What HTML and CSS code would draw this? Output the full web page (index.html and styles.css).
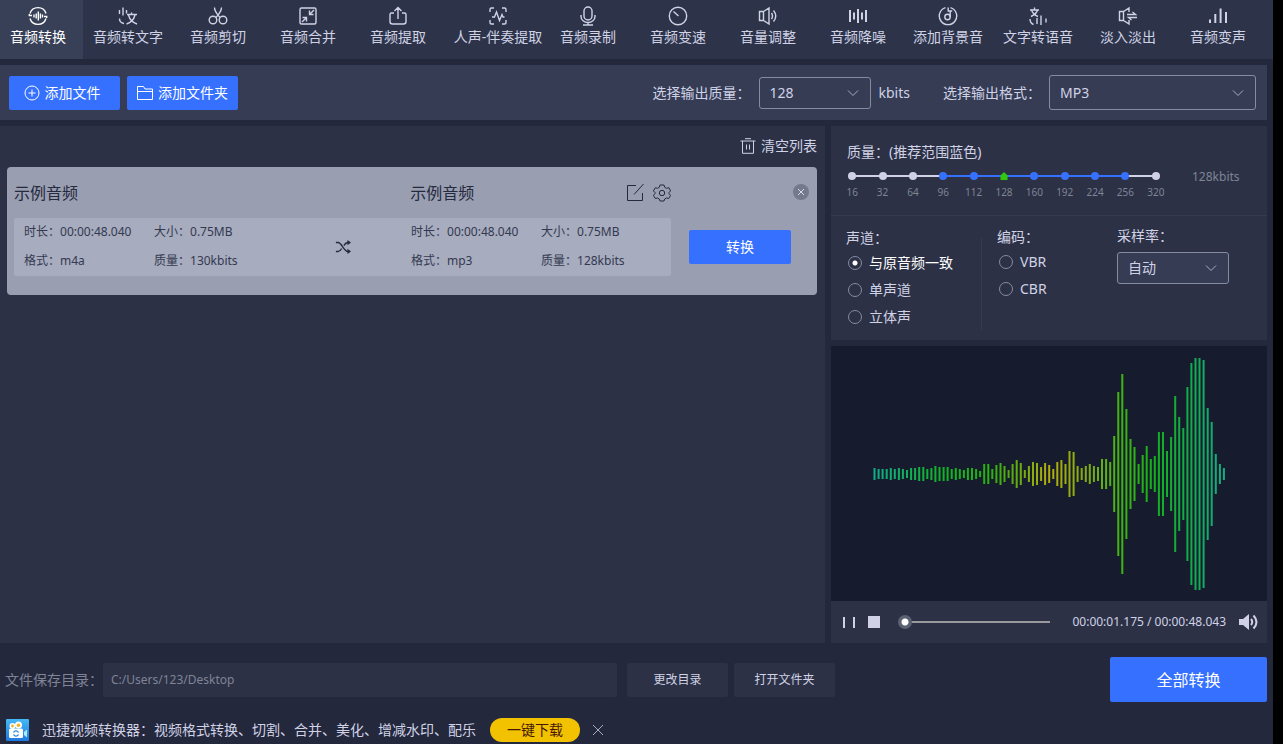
FILE: index.html
```html
<!DOCTYPE html>
<html lang="zh-CN">
<head>
<meta charset="utf-8">
<title>音频转换</title>
<link rel="stylesheet" href="styles.css">
</head>
<body>
<div class="app">
  <nav class="tabs">
    <button class="tab tab-active" type="button"><svg class="icon" viewBox="0 0 20 20"><path d="M2 7.500A8.400 8.400 0 0 1 18 7.500M2 12.500A8.400 8.400 0 0 0 18 12.500M1.300 8v1.500h2.700M18.700 12v-1.500H16M6 8.500v3M8.200 7.500v5M10.300 5.500v9M12.400 7.500v5M14.500 8.500v3"/></svg><span>音频转换</span></button>
    <button class="tab" type="button"><svg class="icon" viewBox="0 0 20 20"><path d="M1.500 4v4M5 1.500v8M8.500 4v3.500M1.500 12.500c0 3 1.500 4.500 4.500 5M9 8.500h10M13.500 6.500v2M10.500 9c1 4 4 7.500 8.500 9M17 9c-1 4-4 7.500-8.500 9"/></svg><span>音频转文字</span></button>
    <button class="tab" type="button"><svg class="icon" viewBox="0 0 20 20"><circle cx="5" cy="14" r="3.800"/><circle cx="15" cy="14" r="3.800"/><path d="M6.500 1.500c0 4 2.500 6.500 5.500 10M13.500 1.500c0 4-2.500 6.500-5.500 10"/></svg><span>音频剪切</span></button>
    <button class="tab" type="button"><svg class="icon" viewBox="0 0 20 20"><rect x="2" y="2" width="16" height="16" rx="1.500"/><path d="M16 4l-4.500 4.500M11.500 4.500v4h4M4 16l4.500-4.500M4.500 11.500h4v4"/></svg><span>音频合并</span></button>
    <button class="tab" type="button"><svg class="icon" viewBox="0 0 20 20"><path d="M6 7H3.500Q2 7 2 8.500v7Q2 18 4.500 18h11q2.500 0 2.500-2.500v-7Q18 7 16.500 7H14M10 13V1.500M6.500 5L10 1.500 13.500 5"/></svg><span>音频提取</span></button>
    <button class="tab tab-wide" type="button"><svg class="icon" viewBox="0 0 20 20"><path d="M2 6V3.500Q2 2 3.500 2H6M14 2h2.500Q18 2 18 3.500V6M18 14v2.500q0 1.500-1.500 1.500H14M6 18H3.500Q2 18 2 16.500V14M4 11h2.500l2-5 3 8.500 2.500-6 1 2.500h1.500"/></svg><span>人声-伴奏提取</span></button>
    <button class="tab" type="button"><svg class="icon" viewBox="0 0 20 20"><rect x="6" y="1" width="8" height="13" rx="4"/><path d="M3 9v1.500a7 6 0 0 0 14 0V9M10 16.500V19M5 19h10"/></svg><span>音频录制</span></button>
    <button class="tab" type="button"><svg class="icon" viewBox="0 0 20 20"><circle cx="10" cy="10" r="8.700"/><path d="M5.500 5.500L10.500 10"/></svg><span>音频变速</span></button>
    <button class="tab" type="button"><svg class="icon" viewBox="0 0 20 20"><path d="M5.500 5.500L11 2v16l-5.500-3.500H1.500v-9h4v9M13.500 7q2 3 0 6M15.500 4.500q4.500 5.500 0 11"/></svg><span>音量调整</span></button>
    <button class="tab" type="button"><svg class="icon icon-bold" viewBox="0 0 20 20"><path d="M2 4v12M6 6.500v7M10 3v14M14 6.500v7M18 4v12"/></svg><span>音频降噪</span></button>
    <button class="tab" type="button"><svg class="icon" viewBox="0 0 20 20"><path d="M7.500 1.600A8.700 8.700 0 1 0 12.500 1.600"/><circle cx="9.500" cy="11" r="2.700"/><path d="M12.200 11V4.500M10.200 1.500v3.500h4"/></svg><span>添加背景音</span></button>
    <button class="tab" type="button"><svg class="icon" viewBox="0 0 20 20"><path d="M2 4h9M6.500 1.500V4M3 10.500Q8.500 8 9.500 4M3.500 4Q5 8.500 10 10.500M2 13q0 4 3.500 5.500M9 12v6M13 9.500V19M18 12.500v4"/></svg><span>文字转语音</span></button>
    <button class="tab" type="button"><svg class="icon" viewBox="0 0 20 20"><path d="M11 6V2L5.500 5.500h-4v9h4L11 18v-4M5.500 5.500v9M9 8.500h8.500l-3-2.500M19 11.500h-8.500l3 2.500"/></svg><span>淡入淡出</span></button>
    <button class="tab" type="button"><svg class="icon icon-bold" viewBox="0 0 20 20"><path d="M2 13.500V17M7.300 8v9M12.600 2.500V17M18 6v11"/></svg><span>音频变声</span></button>
  </nav>

  <section class="toolbar">
    <button class="btn btn-add btn-file" type="button"><svg class="icon-sm" viewBox="0 0 16 16"><circle cx="8" cy="8" r="7"/><path d="M8 4.500v7M4.500 8h7"/></svg>添加文件</button>
    <button class="btn btn-add" type="button"><svg class="icon-sm" viewBox="0 0 16 16"><path d="M.500 14.500v-13h6l1.500 2.500h7.500v10.500zM.500 6.500h15"/></svg>添加文件夹</button>
    <div class="output">
      <label for="out-quality">选择输出质量：</label>
      <span class="select"><select id="out-quality"><option>128</option></select><svg class="chevron" viewBox="0 0 12 12"><path d="M1 3.500l5 5 5-5"/></svg></span>
      <span class="unit">kbits</span>
      <label for="out-format">选择输出格式：</label>
      <span class="select select-format"><select id="out-format"><option>MP3</option></select><svg class="chevron" viewBox="0 0 12 12"><path d="M1 3.500l5 5 5-5"/></svg></span>
    </div>
  </section>

  <main class="workspace">
    <section class="files">
      <button class="clear" type="button"><svg class="icon-sm" viewBox="0 0 16 16"><path d="M.500 3h15M5 .700h6M2.500 3v12.300h11V3M6.500 6.500v5M9.500 6.500v5"/></svg>清空列表</button>
      <article class="card">
        <div class="card-body">
          <div class="card-head">
            <h2>示例音频</h2>
            <h2>示例音频</h2>
            <div class="card-tools">
              <button type="button" aria-label="编辑"><svg class="icon-tool" viewBox="0 0 18 18"><path d="M10 1.500H1.500v15h15V9M8 10.500L17.500 0"/></svg></button>
              <button type="button" aria-label="设置"><svg class="icon-tool" viewBox="0 0 18 18"><circle cx="9" cy="9" r="2.700"/><path d="M7 1h4l.700 2.300 1.800 1 2.400-.600 1.700 3.200L16 8.500v1.200l1.600 1.600-1.900 3.200-2.300-.500-1.700 1L11 17H7l-.700-2-1.700-1-2.300.500-1.900-3.200L2 9.700V8.500L.400 6.900l1.900-3.200 2.300.600 1.700-1z"/></svg></button>
            </div>
          </div>
          <div class="card-info">
            <dl>
              <div><dt>时长：</dt><dd>00:00:48.040</dd></div><div><dt>大小：</dt><dd>0.75MB</dd></div>
              <div><dt>格式：</dt><dd>m4a</dd></div><div><dt>质量：</dt><dd>130kbits</dd></div>
            </dl>
            <svg class="shuffle" viewBox="0 0 18 18"><path d="M1 4h2.500c4 0 6.500 10 11 10H16M1 14h2.500c1.600 0 3-1.500 4-3.300M10 7.300C11.300 5.300 12.700 4 14.500 4H16"/><path class="solid" d="M14 1l4 3-4 3zM14 11l4 3-4 3z"/></svg>
            <dl>
              <div><dt>时长：</dt><dd>00:00:48.040</dd></div><div><dt>大小：</dt><dd>0.75MB</dd></div>
              <div><dt>格式：</dt><dd>mp3</dd></div><div><dt>质量：</dt><dd>128kbits</dd></div>
            </dl>
          </div>
        </div>
        <div class="card-side">
          <button class="close" type="button" aria-label="移除"><svg viewBox="0 0 16 16"><path d="M5 5l6 6M11 5l-6 6"/></svg></button>
          <button class="btn btn-convert" type="button">转换</button>
        </div>
      </article>
    </section>

    <aside class="side">
      <section class="settings">
        <div class="quality">
          <h3>质量：(推荐范围蓝色)</h3>
          <div class="quality-row">
            <div class="steps">
              <label class="step"><input type="radio" name="rate">16</label>
              <label class="step"><input type="radio" name="rate">32</label>
              <label class="step"><input type="radio" name="rate">64</label>
              <label class="step good first"><input type="radio" name="rate">96</label>
              <label class="step good"><input type="radio" name="rate">112</label>
              <label class="step good"><input type="radio" name="rate" checked>128</label>
              <label class="step good"><input type="radio" name="rate">160</label>
              <label class="step good"><input type="radio" name="rate">192</label>
              <label class="step good"><input type="radio" name="rate">224</label>
              <label class="step good"><input type="radio" name="rate">256</label>
              <label class="step"><input type="radio" name="rate">320</label>
            </div>
            <span class="rate">128kbits</span>
          </div>
        </div>
        <div class="options">
          <fieldset class="channel">
            <legend>声道：</legend>
            <label><input type="radio" name="channel" checked><span>与原音频一致</span></label>
            <label><input type="radio" name="channel"><span>单声道</span></label>
            <label><input type="radio" name="channel"><span>立体声</span></label>
          </fieldset>
          <fieldset class="codec">
            <legend>编码：</legend>
            <label><input type="radio" name="codec"><span>VBR</span></label>
            <label><input type="radio" name="codec"><span>CBR</span></label>
          </fieldset>
          <div class="sampling">
            <label for="sampling">采样率：</label>
            <span class="select select-dark"><select id="sampling"><option>自动</option></select><svg class="chevron" viewBox="0 0 12 12"><path d="M1 3.500l5 5 5-5"/></svg></span>
          </div>
        </div>
      </section>

      <section class="preview">
        <svg class="wave" viewBox="0 0 436 255">
          <defs>
            <linearGradient id="wave-colour" gradientUnits="userSpaceOnUse" x1="42" y1="0" x2="395" y2="0">
              <stop offset="0" stop-color="#0fae8c"/>
              <stop offset=".170" stop-color="#12b22e"/>
              <stop offset=".300" stop-color="#18b510"/>
              <stop offset=".400" stop-color="#5cac10"/>
              <stop offset=".500" stop-color="#b4ae0c"/>
              <stop offset=".600" stop-color="#82ac12"/>
              <stop offset=".700" stop-color="#42b512"/>
              <stop offset=".800" stop-color="#12b01c"/>
              <stop offset=".900" stop-color="#12ac4c"/>
              <stop offset="1" stop-color="#12ae86"/>
            </linearGradient>
          </defs>
          <path id="wave-bars" stroke="url(#wave-colour)"/>
        </svg>
        <div class="player">
          <button class="pause" type="button" aria-label="暂停"></button>
          <button class="stop" type="button" aria-label="停止"></button>
          <input class="seek" type="range" min="0" max="48" value="0" aria-label="播放进度">
          <span class="time">00:00:01.175 / 00:00:48.043</span>
          <button class="volume" type="button" aria-label="音量"><svg viewBox="0 0 20 16"><path class="solid" d="M0 5h4l6-5v16l-6-5H0z"/><path d="M12 5q2.500 3 0 6M14.500 1.500q6 6.500 0 13"/></svg></button>
        </div>
      </section>
    </aside>
  </main>

  <footer>
    <div class="save">
      <label for="save-path">文件保存目录：</label>
      <input id="save-path" type="text" value="C:/Users/123/Desktop">
      <button class="btn-plain" type="button">更改目录</button>
      <button class="btn-plain" type="button">打开文件夹</button>
      <button class="btn btn-all" type="button">全部转换</button>
    </div>
    <div class="promo">
      <svg class="promo-logo" viewBox="0 0 23 22"><defs><linearGradient id="logo-sky" x2="0" y2="1"><stop stop-color="#45b8f5"/><stop offset="1" stop-color="#1f78df"/></linearGradient></defs><rect width="23" height="22" rx="1" fill="url(#logo-sky)"/><circle cx="6.500" cy="7" r="3" fill="#fff"/><circle cx="12.500" cy="6" r="3.500" fill="#fff"/><circle cx="6.500" cy="7" r="1.400" fill="#f5ae20"/><circle cx="12.500" cy="6.200" r="1.700" fill="#f5ae20"/><rect x="3" y="9.500" width="14" height="9.500" rx="1.500" fill="#fff"/><path d="M18 13l3-2.500v8L18 16z" fill="#a8edff"/><path d="M7.500 13.500a2.800 2.800 0 0 1 5 0M12.500 15.500a2.800 2.800 0 0 1-5 0" fill="none" stroke="#2684d8" stroke-width="1.300"/></svg>
      <span class="promo-text">迅捷视频转换器：视频格式转换、切割、合并、美化、增减水印、配乐</span>
      <button class="promo-btn" type="button">一键下载</button>
      <button class="promo-close" type="button" aria-label="关闭"><svg viewBox="0 0 12 12"><path d="M1 1l10 10M11 1L1 11"/></svg></button>
    </div>
  </footer>
</div>
<script src="script.js"></script>
</body>
</html>
```
FILE: styles.css
```css
* { box-sizing: border-box; }
body {
  margin: 0;
  background: #000;
  color: #d0d2e6;
  font: 14px/20px "Noto Sans", "Noto Sans CJK SC", sans-serif;
}
button, input, select { font: inherit; color: inherit; }
button { margin: 0; padding: 0; border: 0; background: none; white-space: nowrap; cursor: pointer; }
h2, h3, dl, dd, fieldset { margin: 0; padding: 0; border: 0; font-weight: 400; }
h3 { font-size: 14px; }
legend { padding: 0; }
label { white-space: nowrap; }
svg { display: block; flex: none; fill: none; stroke: currentColor; }
.solid { fill: currentColor; stroke: none; }

.app {
  display: flex;
  flex-direction: column;
  min-height: 100vh;
  margin-right: 10px;
  background: #24283c;
}

.tabs { display: flex; padding-right: 10px; background: #2d3449; }
.tab {
  display: flex;
  flex: 1 1 90px;
  flex-direction: column;
  align-items: center;
  gap: 1px;
  min-width: 0;
  padding: 6px 0 12px;
}
.tab-active { flex-basis: 83px; padding-right: 7px; background: #384058; color: #fff; }
.tab-wide { margin-left: 10px; }
.icon { width: 20px; height: 20px; stroke-width: 1.4; }
.icon-bold { stroke-width: 2; }

.toolbar {
  display: flex;
  align-items: center;
  gap: 7px;
  margin: 6px 6px 6px 0;
  padding: 10px 11px 10px 9px;
  background: #353c54;
}
.btn { border-radius: 2px; background: #3670ff; color: #fff; }
.btn-add { display: flex; align-items: center; justify-content: center; gap: 5px; width: 111px; height: 34px; }
.btn-file { padding-right: 5px; }
.icon-sm { width: 16px; height: 16px; }
.output { display: flex; align-items: center; margin-left: auto; }
.unit { margin: 0 33px 0 8px; }
.select { position: relative; display: flex; width: 112px; height: 32px; margin-left: 8px; }
.select-format { width: 207px; height: 35px; }
.select select {
  width: 100%;
  padding: 0 10px;
  border: 1px solid #868ca0;
  border-radius: 3px;
  background: transparent;
  appearance: none;
}
.select-dark { margin: 6px 0 0; }
.select-dark select { background: #353c54; }
.chevron { position: absolute; top: 50%; right: 12px; width: 12px; height: 12px; margin-top: -6px; color: #a9adc0; pointer-events: none; }

.workspace { display: flex; flex: 1; gap: 6px; margin-right: 6px; }
.files { display: flex; flex: 1; flex-direction: column; min-width: 0; padding: 10px 8px 8px 7px; background: #2c3145; }
.clear { display: flex; align-items: center; gap: 5px; align-self: flex-end; margin-bottom: 11px; }
.card { display: flex; padding: 16px 0 19px 7px; border-radius: 4px; background: #999eb1; color: #252a3e; }
.card-body { flex: 1; }
.card-head { display: grid; grid-template-columns: 397fr 216fr 44fr; align-items: center; height: 20px; margin-bottom: 15px; }
.card-head h2 { font-size: 16px; }
.card-tools { display: flex; justify-content: flex-end; gap: 9px; }
.icon-tool { width: 18px; height: 18px; }
.card-info { display: grid; grid-template-columns: 311fr 76fr 260fr; align-items: center; padding: 4px 0 5px 10px; border-radius: 2px; background: #a7acbf; font-size: 12px; }
.card-info dl { display: grid; grid-template-columns: 130px 1fr; row-gap: 9px; line-height: 20px; color: #343950; }
.card-info dl div { display: flex; }
.shuffle { width: 16px; height: 16px; stroke-width: 1.6; }
.card-side { display: flex; flex-direction: column; width: 146px; padding: 0 8px 0 18px; }
.close { align-self: flex-end; width: 16px; height: 16px; margin: 1px 0 30px; border-radius: 50%; background: #747a8b; color: #d8dae4; }
.btn-convert { width: 102px; height: 34px; }

.side { display: flex; flex-direction: column; flex: 0 0 436px; gap: 6px; }
.settings { background: #2c3145; }
.quality { height: 90px; padding: 16px 16px 0; border-bottom: 1px solid #353a50; }
.quality-row { display: flex; align-items: flex-start; gap: 21px; margin: 9px 0 0 -10px; }
.steps { display: grid; grid-template-columns: repeat(11, 1fr); width: 334px; }
.step { position: relative; display: flex; flex-direction: column; align-items: center; color: #7f8497; font-size: 10px; line-height: 14px; gap: 5px; }
.step::before { content: ""; position: absolute; top: 4px; right: 50%; width: 100%; height: 2px; background: #d0d0e6; }
.step:first-child::before { display: none; }
.good:not(.first)::before { background: #3670ff; }
.step input { position: relative; z-index: 1; width: 8px; height: 8px; margin: 1px 0 0; border-radius: 50%; background: #d0d0e6; appearance: none; }
.good input { background: #3670ff; }
.step input:checked { border-radius: 0; background: #32c80a; clip-path: polygon(50% 0, 94% 44%, 94% 100%, 6% 100%, 6% 44%); }
.rate { color: #7f8497; font-size: 12px; line-height: 12px; }
.options { display: flex; padding: 10px 15px; }
.options label { display: flex; align-items: center; gap: 7px; }
.options legend { line-height: 23px; }
.options input { width: 14px; height: 14px; margin: 0; border: 1px solid #868ca0; border-radius: 50%; appearance: none; }
.options input:checked { background: radial-gradient(circle, #fff 2px, transparent 3px); }
.options input:checked + span { color: #fff; }
.channel { width: 136px; border-right: 1px solid #353a50; }
.channel label { height: 27px; margin-left: 2px; }
.codec { width: 135px; padding-left: 15px; }
.codec legend { line-height: 22px; }
.codec label { height: 27px; margin-left: 2px; }

.preview { display: flex; flex: 1; flex-direction: column; background: #161b2d; }
.wave { flex: 1; width: 100%; min-height: 255px; stroke-width: 2; }
.player { display: flex; align-items: center; height: 42px; padding: 0 8px 0 12px; background: #2c3145; }
.pause { width: 12px; height: 11px; border: solid #d0d0e6; border-width: 0 2px; }
.stop { width: 12px; height: 12px; margin: 0 18px 0 13px; background: #d0d0e6; }
.seek { flex: 1; min-width: 0; height: 14px; margin: 0; background: linear-gradient(#9a999c, #9a999c) 7px 6px / 100% 2px no-repeat; appearance: none; }
.seek::-webkit-slider-thumb { width: 14px; height: 14px; border-radius: 50%; background: radial-gradient(circle, #fff 3px, #5b6072 4px); appearance: none; }
.time { margin: 0 13px 0 22px; font-size: 12px; }
.volume { color: #d0d0e6; }
.volume svg { width: 20px; height: 16px; stroke-width: 2; }

.save { display: flex; align-items: center; padding: 14px 6px 16px 5px; }
.save label { color: #7f8497; }
.save input { flex: 0 1 514px; min-width: 0; height: 34px; padding: 0 8px; border: 0; border-radius: 2px; background: #2c3145; color: #7f8497; font-size: 12px; }
.btn-plain { width: 101px; height: 34px; margin-left: 6px; border-radius: 2px; background: #2c3145; font-size: 12px; }
.save input + .btn-plain { margin-left: 10px; }
.btn-all { width: 157px; height: 45px; margin-left: auto; font-size: 16px; }
.promo { display: flex; align-items: center; padding: 0 6px 2px; }
.promo-logo { width: 23px; height: 22px; stroke: none; }
.promo-text { margin: 0 14px 0 13px; }
.promo-btn { width: 90px; height: 24px; border-radius: 12px; background: #f2c200; color: #461600; }
.promo-close { margin-left: 12px; color: #a9adc0; }
.promo-close svg { width: 12px; height: 12px; }
```
FILE: script.js
```js
// Half-height of each bar of the waveform, left to right.
const levels = [
  6, 5, 5, 5, 6, 5, 6, 5, 4, 6, 6, 7, 7, 5, 6, 8, 7, 7, 7, 5, 6, 5, 4, 6, 6, 5, 3,
  10, 10, 5, 9, 11, 8, 4, 10, 14, 11, 4, 8, 12, 11, 7, 11, 9, 5, 12, 14, 10, 23, 22, 8,
  6, 8, 10, 8, 7, 15, 15, 12, 38, 82, 100, 65, 35, 27, 10, 19, 28, 15, 18, 42, 42, 23,
  37, 78, 57, 46, 87, 111, 116, 116, 114, 66, 52, 20, 10, 6
];
const first = 43.5;
const step = 4.063;
const middle = 128;
document.getElementById("wave-bars").setAttribute("d", levels.map((level, i) =>
  `M${(first + i * step).toFixed(1)} ${middle - level}v${level * 2}`).join(""));
```
